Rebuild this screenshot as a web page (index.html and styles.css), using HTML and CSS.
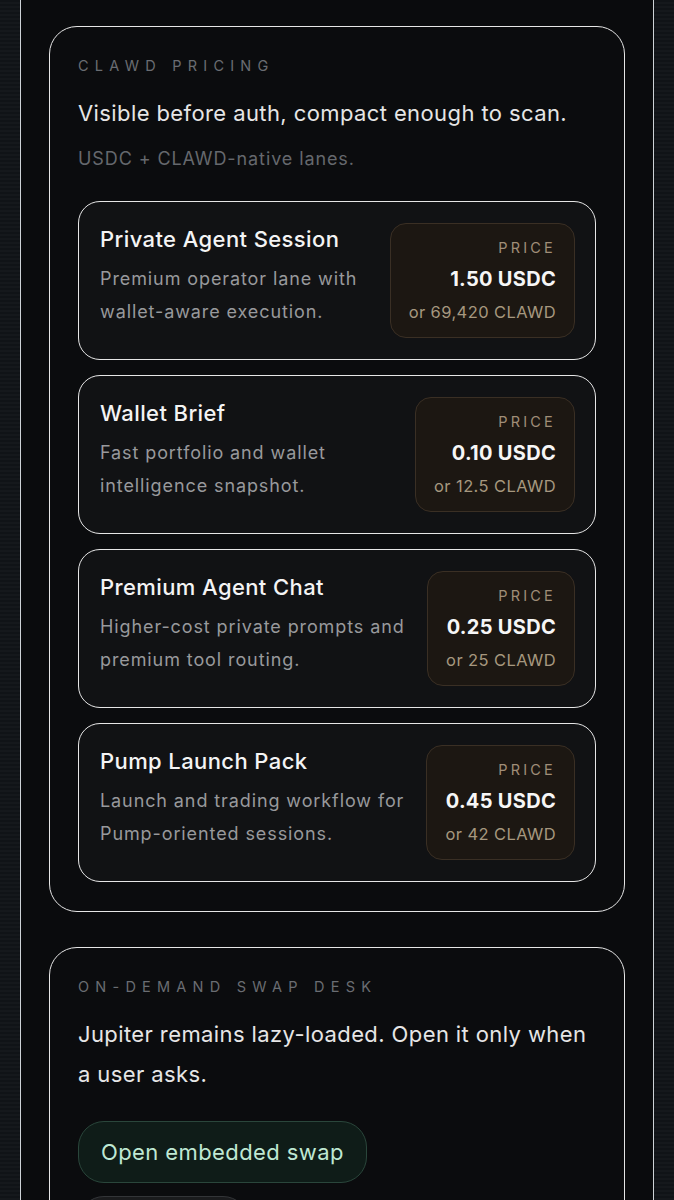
FILE: index.html
```html
<!DOCTYPE html>
<html lang="en">
  <head>
    <meta charset="UTF-8" />
    <meta name="viewport" content="width=device-width, initial-scale=1.0" />
    <title>CLAWD Pricing</title>
    <link rel="stylesheet" href="styles.css">
  </head>
  <body>
    <div class="shell">
      <section class="panel">
        <p class="eyebrow">CLAWD Pricing</p>
        <h2 class="lead">Visible before auth, compact enough to scan.</h2>
        <p class="note">USDC + CLAWD-native lanes.</p>

        <div class="plans">
          <article class="plan">
            <div class="plan-info">
              <h3>Private Agent Session</h3>
              <p>Premium operator lane with wallet-aware execution.</p>
            </div>
            <div class="price">
              <span class="price-label">Price</span>
              <span class="price-main">1.50 USDC</span>
              <span class="price-alt">or 69,420 CLAWD</span>
            </div>
          </article>

          <article class="plan">
            <div class="plan-info">
              <h3>Wallet Brief</h3>
              <p>Fast portfolio and wallet intelligence snapshot.</p>
            </div>
            <div class="price">
              <span class="price-label">Price</span>
              <span class="price-main">0.10 USDC</span>
              <span class="price-alt">or 12.5 CLAWD</span>
            </div>
          </article>

          <article class="plan">
            <div class="plan-info">
              <h3>Premium Agent Chat</h3>
              <p>Higher-cost private prompts and premium tool routing.</p>
            </div>
            <div class="price">
              <span class="price-label">Price</span>
              <span class="price-main">0.25 USDC</span>
              <span class="price-alt">or 25 CLAWD</span>
            </div>
          </article>

          <article class="plan">
            <div class="plan-info">
              <h3>Pump Launch Pack</h3>
              <p>Launch and trading workflow for Pump-oriented sessions.</p>
            </div>
            <div class="price">
              <span class="price-label">Price</span>
              <span class="price-main">0.45 USDC</span>
              <span class="price-alt">or 42 CLAWD</span>
            </div>
          </article>
        </div>
      </section>

      <section class="panel">
        <p class="eyebrow">On-demand swap desk</p>
        <h2 class="lead">Jupiter remains lazy-loaded. Open it only when a user asks.</h2>
        <div class="actions">
          <button class="btn btn-go" type="button">Open embedded swap</button>
          <button class="btn btn-plain" type="button">Close swap</button>
        </div>
      </section>
    </div>
  </body>
</html>
```

FILE: styles.css
```css
body {
  margin: 0;
  font-family: Inter, "Noto Sans", sans-serif;
  background: repeating-linear-gradient(to bottom, #101317 0, #101317 2px, #15181c 2px, #15181c 4px);
  color: #e8e8e8;
}

.shell {
  margin: 0 20px;
  min-height: 100vh;
  padding: 26px 28px;
  background: #0a0b0d;
  border-left: 1px solid #cdd2d6;
  border-right: 1px solid #cdd2d6;
  display: flex;
  flex-direction: column;
  gap: 35px;
}

.panel {
  border: 1.5px solid #e6e6e6;
  border-radius: 28px;
  padding: 29px 28px;
  background: #0b0c0e;
}

.eyebrow {
  margin: 0;
  font-size: 14.5px;
  line-height: 20px;
  letter-spacing: 0.43em;
  text-transform: uppercase;
  color: #6a6d72;
}

.lead {
  margin: 17px 0 0;
  font-size: 22px;
  line-height: 40px;
  letter-spacing: 0.4px;
  font-weight: 400;
  color: #e6e6e6;
}

.note {
  margin: 13px 0 0;
  font-size: 18px;
  line-height: 26px;
  letter-spacing: 0.9px;
  color: #65686d;
}

.plans {
  margin-top: 29px;
  display: flex;
  flex-direction: column;
  gap: 15px;
}

.plan {
  display: flex;
  align-items: flex-start;
  gap: 18px;
  padding: 21px 20px 21px 21px;
  background: #111214;
  border: 1.5px solid #e6e6e6;
  border-radius: 22px;
}

.plan-info {
  flex: 1;
  padding-top: 2px;
}

.plan-info h3 {
  margin: 0;
  font-size: 22px;
  line-height: 28px;
  letter-spacing: 0.4px;
  font-weight: 500;
  color: #f4f4f4;
}

.plan-info p {
  margin: 9px 0 0;
  font-size: 18px;
  line-height: 33px;
  letter-spacing: 0.9px;
  color: #98999c;
}

.price {
  display: flex;
  flex-direction: column;
  align-items: flex-end;
  padding: 14px 18px 13px;
  background: #1c1712;
  border: 1px solid #3a2f24;
  border-radius: 16px;
  white-space: nowrap;
}

.price-label {
  font-size: 14.5px;
  line-height: 20px;
  letter-spacing: 0.22em;
  text-transform: uppercase;
  color: #a08e78;
}

.price-main {
  margin-top: 8px;
  font-size: 20px;
  line-height: 26px;
  letter-spacing: 0.3px;
  font-weight: 700;
  color: #f6f6f6;
}

.price-alt {
  margin-top: 8px;
  font-size: 16.5px;
  line-height: 24px;
  letter-spacing: 0.4px;
  color: #a6977f;
}

.actions {
  margin-top: 27px;
  display: flex;
  flex-direction: column;
  align-items: flex-start;
  gap: 13px;
}

.btn {
  font-family: inherit;
  font-size: 22px;
  line-height: 28px;
  letter-spacing: 0.4px;
  padding: 16px 22px;
  border-radius: 26px;
  cursor: pointer;
}

.btn-go {
  background: #0f1c18;
  border: 1px solid #2a463b;
  color: #bfe8d3;
}

.btn-plain {
  background: #1a1b1d;
  border: 1px solid #333538;
  color: #d8d8d8;
}
```
